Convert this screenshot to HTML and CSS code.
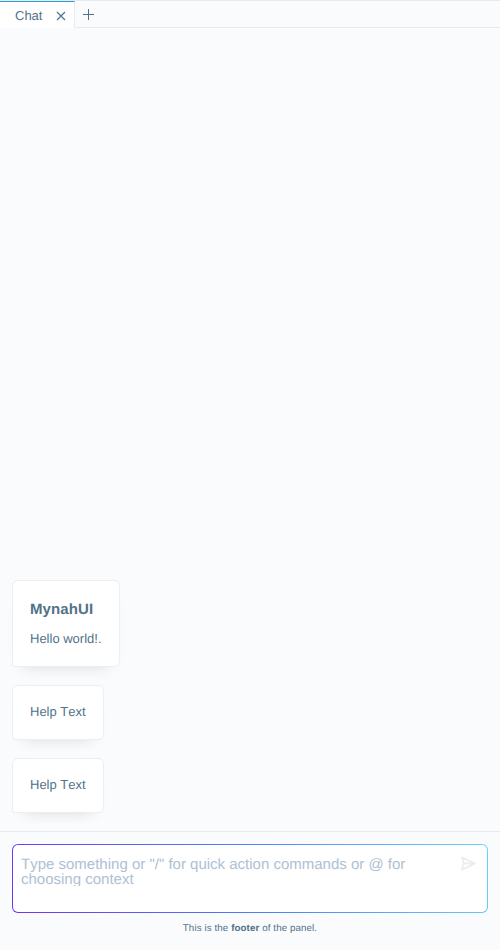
FILE: index.html
```html
<!DOCTYPE html>
<html lang="en">
<head>
<meta charset="utf-8">
<title>MynahUI</title>
<link rel="stylesheet" href="styles.css">
</head>
<body>
<div class="app">
  <nav class="tabs">
    <div class="tab">
      <span>Chat</span>
      <svg class="close" viewBox="0 0 10 10"><path d="M1 1L9 9M9 1L1 9"/></svg>
    </div>
    <div class="tabs-rest">
      <svg class="plus" viewBox="0 0 11 11"><path d="M5.5 0V11M0 5.5H11"/></svg>
    </div>
  </nav>
  <main class="chat">
    <article class="card">
      <h1>MynahUI</h1>
      <p>Hello world!.</p>
    </article>
    <article class="card"><p>Help Text</p></article>
    <article class="card"><p>Help Text</p></article>
  </main>
  <section class="prompt-area">
    <div class="prompt">
      <div class="prompt-inner">
        <div class="placeholder">Type something or "/" for quick action commands or @ for choosing context</div>
        <svg class="send" viewBox="0 0 16 16"><path d="M1.9 1.4L15 7.5L1.9 13.6L3.7 7.5ZM3.7 7.5H14"/></svg>
      </div>
    </div>
    <footer>This is the <strong>footer</strong> of the panel.</footer>
  </section>
</div>
</body>
</html>
```
FILE: styles.css
```css
* {
  box-sizing: border-box;
}

body {
  margin: 0;
  background: #fafbfd;
  color: #517388;
  font: 13px/19px "Liberation Sans", Arial, sans-serif;
  text-rendering: geometricPrecision;
}

h1,
p {
  margin: 0;
}

svg {
  display: block;
  flex: none;
  fill: none;
  stroke: currentColor;
}

.app {
  display: flex;
  flex-direction: column;
  height: 950px;
  border-top: 1px solid #e6ebef;
}

.tabs {
  display: flex;
  height: 27px;
}

.tab {
  display: flex;
  align-items: center;
  justify-content: space-between;
  width: 75px;
  padding: 1px 8px 0 15px;
  background: #fff;
  border-top: 1px solid #2a9fd6;
  border-right: 1px solid #e6ebef;
}

.close {
  width: 10px;
  height: 10px;
  stroke-width: 1.2;
}

.tabs-rest {
  display: flex;
  flex: 1;
  align-items: center;
  padding-left: 8px;
  padding-top: 1px;
  border-bottom: 1px solid #e6ebef;
}

.plus {
  width: 11px;
  height: 11px;
}

.chat {
  display: flex;
  flex: 1;
  flex-direction: column;
  justify-content: flex-end;
  align-items: flex-start;
  gap: 18px;
  padding: 0 12px 18px;
}

.card {
  padding: 16px 17px 18px;
  background: #fff;
  border: 1px solid #e9eff3;
  border-radius: 6px 6px 6px 3px;
  box-shadow: 0 10px 15px -12px rgba(0, 0, 0, 0.17);
  font-kerning: none;
}

.card h1 {
  padding-top: 2px;
  margin-bottom: 9px;
  font-size: 15px;
  line-height: 21px;
  letter-spacing: 0.1px;
}

.prompt-area {
  height: 119px;
  padding: 12px 12px 0;
  border-top: 1px solid #e6ebef;
}

.prompt {
  height: 69px;
  padding: 1px;
  border-radius: 6px;
  background: linear-gradient(65deg, #7233f0, #4b80f8 50%, #72cff8);
}

.prompt-inner {
  display: flex;
  justify-content: space-between;
  height: 67px;
  padding: 11px 11px 0 8px;
  background: #fff;
  border-radius: 5px;
}

.placeholder {
  width: 410px;
  height: 30px;
  padding-top: 1px;
  overflow: hidden;
  color: #adc1d3;
  font-size: 15px;
  line-height: 15px;
  font-kerning: none;
}

.send {
  width: 16px;
  height: 16px;
  color: #e9eef2;
  stroke-width: 1.8;
  stroke-linejoin: round;
}

footer {
  margin-top: 10px;
  font-size: 9.75px;
  letter-spacing: 0.1px;
  line-height: 12px;
  text-align: center;
}
```
